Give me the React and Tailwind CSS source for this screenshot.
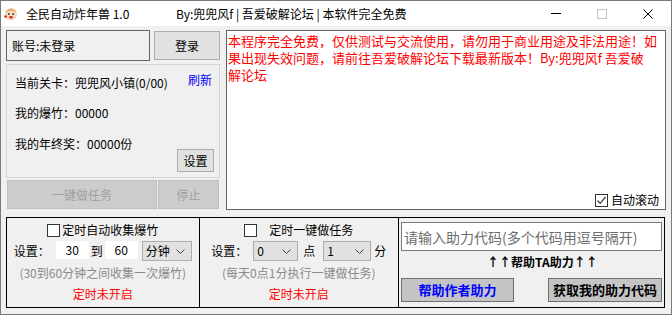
import React from 'react'

function Chevron() {
  return (
    <svg width="9" height="5" viewBox="0 0 9 5" className="shrink-0">
      <path d="M0.5 0.5 L4.5 4.5 L8.5 0.5" fill="none" stroke="#444" strokeWidth="1" />
    </svg>
  )
}

function Select({ value, className }) {
  return (
    <div className={`flex items-center justify-between h-[20px] bg-[#e1e1e1] border border-[#adadad] pl-[3px] pr-[6px] ${className}`}>
      <span>{value}</span>
      <Chevron />
    </div>
  )
}

function CheckBox({ checked }) {
  return (
    <span className="w-[13px] h-[13px] border border-[#333] bg-white flex items-center justify-center shrink-0">
      {checked && (
        <svg width="11" height="11" viewBox="0 0 11 11">
          <path d="M1.5 5.5 L4.2 8.3 L9.5 2" fill="none" stroke="#444" strokeWidth="1.3" />
        </svg>
      )}
    </span>
  )
}

function AppIcon() {
  return (
    <svg width="14" height="14" viewBox="0 0 14 14" className="shrink-0">
      <circle cx="7" cy="7.5" r="6" fill="#f7dcc0" />
      <path d="M1.5 6 Q3 1 7 1.5 Q11 1 12.5 6 Q10 3.5 7 4 Q4 3.5 1.5 6 Z" fill="#e8b070" />
      <circle cx="4.8" cy="7" r="0.9" fill="#333" />
      <circle cx="9.2" cy="7" r="0.9" fill="#333" />
      <ellipse cx="7" cy="10.3" rx="1.8" ry="1.2" fill="#e02020" />
      <circle cx="1.6" cy="9.5" r="1.3" fill="#e02020" />
    </svg>
  )
}

export default function App() {
  return (
    <div className="w-[672px] h-[315px] border border-[#7a7a7a] bg-[#f0f0f0] flex flex-col text-[12px] leading-[16px] text-black font-['Noto_Sans_CJK_SC',sans-serif] overflow-hidden">
      {/* Title bar */}
      <div className="h-[25px] bg-white flex items-center shrink-0">
        <span className="ml-[3px]"><AppIcon /></span>
        <span className="ml-[8px] w-[150px] whitespace-nowrap">全民自动炸年兽 1.0</span>
        <span className="whitespace-nowrap">By:兜兜风f | 吾爱破解论坛 | 本软件完全免费</span>
        <div className="ml-auto flex h-full">
          <div className="w-[46px] flex items-center justify-center">
            <span className="w-[10px] h-px bg-black" />
          </div>
          <div className="w-[46px] flex items-center justify-center">
            <span className="w-[10px] h-[10px] border border-[#c4c4c4]" />
          </div>
          <div className="w-[46px] flex items-center justify-center">
            <svg width="10" height="10" viewBox="0 0 10 10">
              <path d="M0.5 0.5 L9.5 9.5 M9.5 0.5 L0.5 9.5" stroke="#000" strokeWidth="1" />
            </svg>
          </div>
        </div>
      </div>

      {/* Main row */}
      <div className="flex pl-[5px] pt-[4px] gap-[6px]">
        {/* Left column */}
        <div className="w-[214px] flex flex-col">
          <div className="flex">
            <div className="w-[144px] h-[31px] border border-[#646464] flex items-center pl-[5px]">
              账号:未登录
            </div>
            <button className="ml-[4px] mt-[1px] w-[66px] h-[29px] bg-[#e1e1e1] border border-[#adadad]">
              登录
            </button>
          </div>

          <div className="mt-[3px] h-[114px] border border-[#d5d5d5] flex flex-col pt-[10px] pl-[8px] pr-[5px]">
            <div className="flex justify-between">
              <span>当前关卡：兜兜风小镇(0/00)</span>
              <span className="text-[#0000ff] mt-[-3px] mr-[2px]">刷新</span>
            </div>
            <div className="mt-[14px]">我的爆竹：00000</div>
            <div className="mt-[15px] flex justify-between">
              <span>我的年终奖：00000份</span>
              <button className="mt-[13px] w-[37px] h-[23px] bg-[#e1e1e1] border border-[#adadad]">
                设置
              </button>
            </div>
          </div>

          <div className="mt-[2px] flex h-[29px]">
            <button className="ml-[1px] w-[150px] h-full bg-[#cccccc] border border-[#bfbfbf] text-[#a0a0a0]">
              一键做任务
            </button>
            <button className="ml-[1px] w-[61px] h-full bg-[#cccccc] border border-[#bfbfbf] text-[#a0a0a0]">
              停止
            </button>
          </div>
        </div>

        {/* Log */}
        <div className="w-[440px] h-[180px] border border-[#646464] bg-white flex flex-col">
          <div className="flex-1 pl-[1px] pt-[1px] text-[13px] leading-[17px] text-[#ff0000] whitespace-pre">
            <div>本程序完全免费，仅供测试与交流使用，请勿用于商业用途及非法用途！如</div>
            <div>果出现失效问题，请前往吾爱破解论坛下载最新版本！By:兜兜风f 吾爱破</div>
            <div>解论坛</div>
          </div>
          <div className="flex items-center justify-end h-[16px] mb-[1px] pr-[6px] gap-[3px]">
            <CheckBox checked />
            <span>自动滚动</span>
          </div>
        </div>
      </div>

      {/* Bottom box */}
      <div className="mt-[7px] ml-[5px] w-[659px] h-[91px] border border-black flex">
        {/* Panel 1 */}
        <div className="w-[193px] border-r border-black flex flex-col items-center pt-[4px]">
          <div className="h-[16px] flex items-center gap-[2px]">
            <CheckBox />
            <span>定时自动收集爆竹</span>
          </div>
          <div className="mt-[3px] h-[20px] flex items-start">
            <span className="leading-[20px] mr-[6px]">设置：</span>
            <div className="w-[33px] h-[18px] bg-white flex items-center justify-center">30</div>
            <span className="leading-[20px] mx-[2px]">到</span>
            <div className="w-[33px] h-[18px] bg-white flex items-center justify-center">60</div>
            <Select value="分钟" className="ml-[4px] w-[50px]" />
          </div>
          <div className="mt-[4px] text-[#8a8a8a]">(30到60分钟之间收集一次爆竹)</div>
          <div className="mt-[5px] text-[#ff0000]">定时未开启</div>
        </div>

        {/* Panel 2 */}
        <div className="w-[200px] border-r border-black flex flex-col items-center pt-[4px]">
          <div className="h-[16px] flex items-center gap-[12px]">
            <CheckBox />
            <span>定时一键做任务</span>
          </div>
          <div className="mt-[3px] h-[20px] flex items-center">
            <span className="mr-[6px]">设置：</span>
            <Select value="0" className="w-[45px]" />
            <span className="ml-[5px] mr-[8px]">点</span>
            <Select value="1" className="w-[48px]" />
            <span className="ml-[3px]">分</span>
          </div>
          <div className="mt-[4px] text-[#8a8a8a]">(每天0点1分执行一键做任务)</div>
          <div className="mt-[5px] text-[#ff0000]">定时未开启</div>
        </div>

        {/* Panel 3 */}
        <div className="flex-1 flex flex-col pt-[4px] px-[2px]">
          <div className="h-[29px] w-[261px] bg-white border border-[#7a7a7a] flex items-center pl-[2px] text-[14px] text-[#6d6d6d] whitespace-nowrap">
            请输入助力代码(多个代码用逗号隔开)
          </div>
          <div className="mt-[3px] pl-[86px] font-bold whitespace-nowrap">↑↑帮助TA助力↑↑</div>
          <div className="mt-[8px] flex justify-between">
            <button className="w-[113px] h-[24px] bg-[#c4c4c4] border border-[#6e6e6e] text-[13px] font-bold text-[#0000ff]">
              帮助作者助力
            </button>
            <button className="w-[114px] h-[24px] bg-[#c4c4c4] border border-[#6e6e6e] text-[13px] font-bold">
              获取我的助力代码
            </button>
          </div>
        </div>
      </div>
    </div>
  )
}
